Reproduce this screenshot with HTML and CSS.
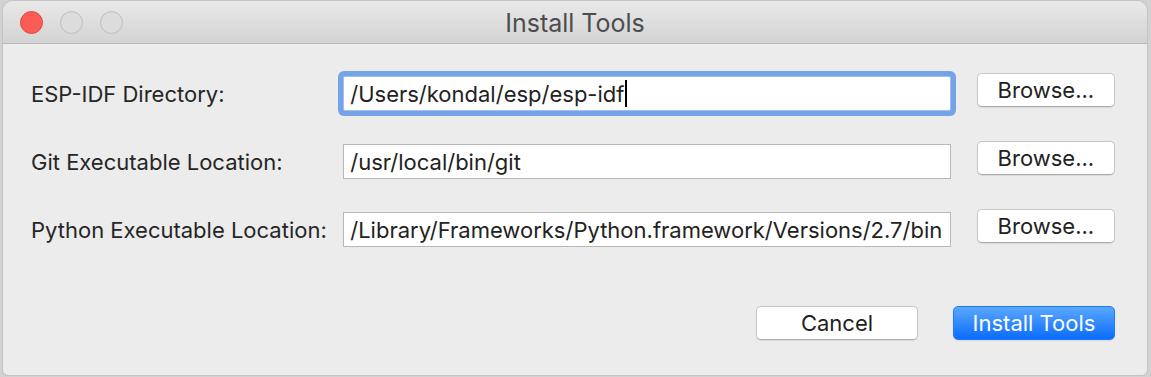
FILE: index.html
```html
<!DOCTYPE html>
<html lang="en">
<head>
    <meta charset="UTF-8">
    <title>Install Tools</title>
    <link rel="stylesheet" href="styles.css">
</head>
<body>
    <div class="window">
        <div class="titlebar">
            <div class="lights">
                <span class="light close"></span>
                <span class="light"></span>
                <span class="light"></span>
            </div>
            <span class="title">Install Tools</span>
        </div>
        <div class="content">
            <div class="row">
                <label class="label">ESP-IDF Directory:</label>
                <div class="field focused">/Users/kondal/esp/esp-idf<span class="caret"></span></div>
                <button class="btn">Browse...</button>
            </div>
            <div class="row">
                <label class="label">Git Executable Location:</label>
                <div class="field">/usr/local/bin/git</div>
                <button class="btn">Browse...</button>
            </div>
            <div class="row">
                <label class="label">Python Executable Location:</label>
                <div class="field">/Library/Frameworks/Python.framework/Versions/2.7/bin</div>
                <button class="btn">Browse...</button>
            </div>
            <div class="footer">
                <button class="btn wide">Cancel</button>
                <button class="btn wide primary">Install Tools</button>
            </div>
        </div>
    </div>
</body>
</html>
```

FILE: styles.css
```css
body {
    margin: 0;
    padding: 1px 4px 2px 3px;
    background: #d2d2d2;
    font-family: Inter, "Liberation Sans", sans-serif;
    height: 377px;
    box-sizing: border-box;
    overflow: hidden;
}
.window {
    height: 374px;
    background: #ececec;
    border-radius: 10px 10px 5px 5px;
    box-shadow: 0 0 0 1px #c4c4c4;
    overflow: hidden;
    display: flex;
    flex-direction: column;
}
.titlebar {
    height: 42px;
    flex: none;
    position: relative;
    display: flex;
    align-items: center;
    justify-content: center;
    background: linear-gradient(#e9e9e9, #d3d3d3);
    border-bottom: 1px solid #b9b9b9;
}
.lights {
    position: absolute;
    left: 17px;
    top: 10px;
    display: flex;
    gap: 17px;
}
.light {
    width: 21px;
    height: 21px;
    border-radius: 50%;
    border: 1px solid #bdbdbd;
    background: #dcdcdc;
}
.light.close {
    background: #fd5b56;
    border-color: #e2463f;
}
.title {
    font-size: 25px;
    color: #4d4d4d;
    margin-top: 1px;
}
.content {
    padding: 32px 32px 0 28px;
    display: flex;
    flex-direction: column;
    gap: 33px;
}
.row {
    display: flex;
    align-items: center;
    height: 35px;
}
.label {
    width: 314px;
    font-size: 22px;
    color: #262626;
}
.field {
    width: 603px;
    height: 33px;
    border: 1px solid #b7b7b7;
    background: #fff;
    font-size: 22px;
    color: #222;
    padding-left: 6px;
    box-sizing: content-box;
    display: flex;
    align-items: center;
    white-space: nowrap;
    overflow: hidden;
    margin-right: 26px;
}
.field.focused {
    border-color: #9fbfef;
    border-radius: 2px;
    box-shadow: 0 0 0 5px #74a3e8;
}
.caret {
    width: 2px;
    height: 27px;
    background: #000;
    margin-left: 1px;
}
.btn {
    width: 139px;
    height: 34px;
    margin-top: -8px;
    border: 1px solid #c6c6c6;
    border-bottom-color: #aaaaaa;
    border-radius: 5px;
    background: #fff;
    font-family: inherit;
    font-size: 22px;
    color: #222;
    padding: 0;
    box-shadow: 0 1px 1px rgba(0,0,0,0.08);
}
.footer {
    display: flex;
    justify-content: flex-end;
    gap: 35px;
    margin-top: 26px;
}
.btn.wide {
    width: 162px;
    margin-top: 0;
}
.btn.primary {
    color: #fff;
    border-color: #1a7bfb;
    background: linear-gradient(#5aa8fd, #0a6cfe);
}
```
